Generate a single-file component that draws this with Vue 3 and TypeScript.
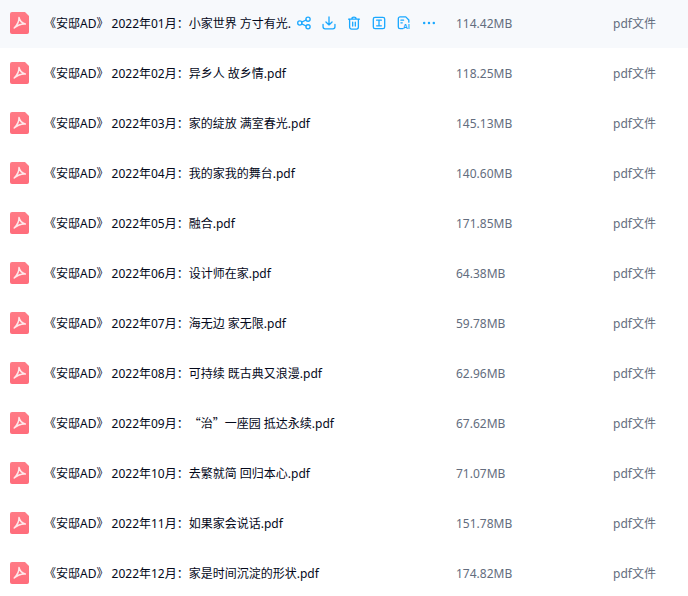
<script setup lang="ts">
interface FileRow {
  name: string
  size: string
}

const files: FileRow[] = [
  { name: '《安邸AD》 2022年01月：小家世界 方寸有光.pdf', size: '114.42MB' },
  { name: '《安邸AD》 2022年02月：异乡人 故乡情.pdf', size: '118.25MB' },
  { name: '《安邸AD》 2022年03月：家的绽放 满室春光.pdf', size: '145.13MB' },
  { name: '《安邸AD》 2022年04月：我的家我的舞台.pdf', size: '140.60MB' },
  { name: '《安邸AD》 2022年05月：融合.pdf', size: '171.85MB' },
  { name: '《安邸AD》 2022年06月：设计师在家.pdf', size: '64.38MB' },
  { name: '《安邸AD》 2022年07月：海无边 家无限.pdf', size: '59.78MB' },
  { name: '《安邸AD》 2022年08月：可持续 既古典又浪漫.pdf', size: '62.96MB' },
  { name: '《安邸AD》 2022年09月：“治”一座园 抵达永续.pdf', size: '67.62MB' },
  { name: '《安邸AD》 2022年10月：去繁就简 回归本心.pdf', size: '71.07MB' },
  { name: '《安邸AD》 2022年11月：如果家会说话.pdf', size: '151.78MB' },
  { name: '《安邸AD》 2022年12月：家是时间沉淀的形状.pdf', size: '174.82MB' },
]

// curly quotes take a full CJK cell in the original
const nameParts = (name: string) => name.split(/([“”])/)
</script>

<template>
  <div class="file-list">
    <div v-for="(file, i) in files" :key="file.name" class="file-row" :class="{ active: i === 0 }">
      <svg class="pdf-icon" viewBox="0 0 19 22" aria-hidden="true">
        <defs>
          <linearGradient :id="`pdf-${i}`" x1="0" y1="0" x2="0" y2="1">
            <stop offset="0" stop-color="#ff7b86" />
            <stop offset="1" stop-color="#ff6c7b" />
          </linearGradient>
        </defs>
        <path d="M2 0H15L19 4V20a2 2 0 0 1-2 2H2a2 2 0 0 1-2-2V2a2 2 0 0 1 2-2z" :fill="`url(#pdf-${i})`" />
        <path d="M9 5.500c.2 3.200-1.800 7.500-4.800 10.500M9 5.500c.6 3 3 5.500 6.300 6.500-4-.3-7.300.8-11.100 4" fill="none" stroke="#ffe9ea" stroke-width="1.500" stroke-linecap="round" stroke-linejoin="round" />
      </svg>
      <div class="file-main">
        <div class="file-name">
          <template v-for="(part, p) in nameParts(file.name)" :key="p">
            <span v-if="p % 2" class="cjk-quote" :class="{ open: part === '“' }">{{ part }}</span>
            <template v-else>{{ part }}</template>
          </template>
        </div>
        <div v-if="i === 0" class="row-actions">
          <svg viewBox="0 0 16 16" aria-hidden="true">
            <circle cx="3.200" cy="8" r="2.400" />
            <circle cx="12.600" cy="3.600" r="2.400" />
            <circle cx="12.600" cy="12.400" r="2.400" />
            <path d="M5.400 7 10.400 4.600M5.400 9l5 2.400" />
          </svg>
          <svg viewBox="0 0 16 16" aria-hidden="true">
            <path d="M8 1v9M4.500 6.800 8 10.200l3.500-3.400" />
            <path d="M1.200 9.500v2.800a2.400 2.400 0 0 0 2.400 2.400h8.800a2.400 2.400 0 0 0 2.400-2.400V9.500" />
          </svg>
          <svg viewBox="0 0 16 16" aria-hidden="true">
            <path d="M1.800 3.600h12.400M5.600 3.400c0-2.700 4.800-2.700 4.800 0" />
            <path d="M3 3.800v8.900a2.200 2.200 0 0 0 2.200 2.200h5.600a2.200 2.200 0 0 0 2.200-2.200V3.800" />
            <path d="M6.500 7v4.500M9.500 7v4.500" />
          </svg>
          <svg viewBox="0 0 16 16" aria-hidden="true">
            <rect x="1.500" y="1.500" width="13" height="13" rx="2" />
            <path d="M5.300 4.800h5.400M5.300 11.200h5.400M8 4.800v6.400" />
          </svg>
          <svg viewBox="0 0 16 16" aria-hidden="true">
            <path d="M6.500 14.500H3.500a2 2 0 0 1-2-2V3a2 2 0 0 1 2-2h6.500l3.500 3.500V7" />
            <path d="M4.500 4.800h3M4.500 7.800h1.500" />
            <text class="ai-mark" x="6.600" y="15.400">AI</text>
          </svg>
          <svg viewBox="0 0 16 16" aria-hidden="true">
            <circle class="dot" cx="2.500" cy="8" r="1.400" />
            <circle class="dot" cx="8" cy="8" r="1.400" />
            <circle class="dot" cx="13.500" cy="8" r="1.400" />
          </svg>
        </div>
      </div>
      <div class="file-size">{{ file.size }}</div>
      <div class="file-type">pdf文件</div>
    </div>
  </div>
</template>

<style>
html,
body {
  background: #fff;
  overflow: hidden;
}
</style>

<style scoped>
.file-list {
  margin-top: -2px;
  font-family: "Noto Sans", "Noto Sans CJK SC", sans-serif;
  font-size: 12px;
}
.file-row {
  display: flex;
  align-items: center;
  height: 50px;
  padding-left: 10px;
}
.file-row.active {
  background: #f7f9fc;
}
.pdf-icon {
  flex: none;
  width: 19px;
  height: 22px;
  margin-right: 15px;
}
.file-main {
  flex: none;
  display: flex;
  align-items: center;
  width: 412px;
}
.file-name {
  color: #03081a;
  white-space: nowrap;
}
.cjk-quote {
  display: inline-block;
  width: 12px;
  font-family: "Noto Sans CJK SC", sans-serif;
}
.cjk-quote.open {
  text-align: right;
}
.active .file-name {
  flex: none;
  width: 247px;
  overflow: hidden;
}
.row-actions {
  flex: none;
  display: flex;
  align-items: center;
  gap: 11px;
  margin-left: 6px;
}
.row-actions svg {
  flex: none;
  width: 14px;
  height: 14px;
  fill: none;
  stroke: #1aa8ff;
  stroke-width: 1.500;
  stroke-linecap: round;
  stroke-linejoin: round;
}
.row-actions svg .dot {
  fill: #1aa8ff;
  stroke: none;
}
.row-actions svg .ai-mark {
  fill: #1aa8ff;
  stroke: none;
  font-size: 8px;
  font-weight: 700;
  font-family: "Liberation Sans", sans-serif;
}
.file-size {
  flex: none;
  width: 157px;
  color: #636d7e;
}
.file-type {
  flex: none;
  color: #636d7e;
}
</style>
